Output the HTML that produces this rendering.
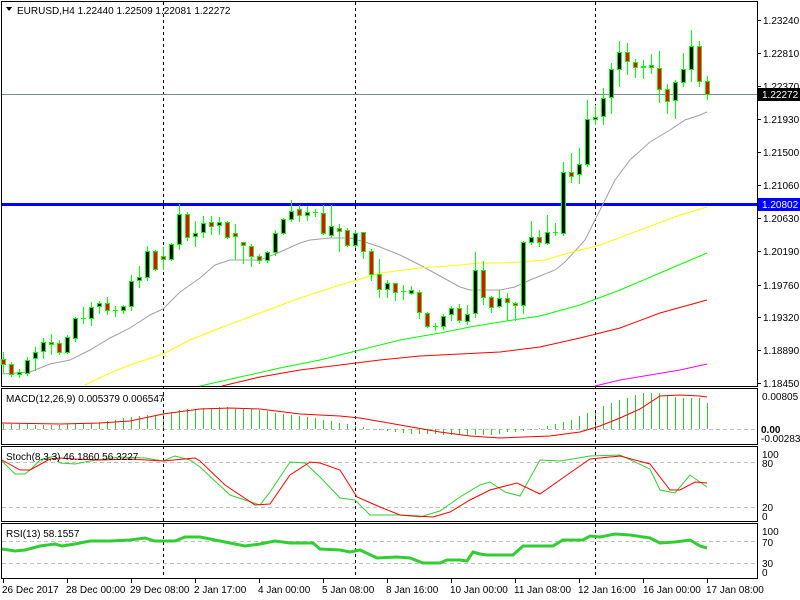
<!DOCTYPE html>
<html><head><meta charset="utf-8"><style>
html,body{margin:0;padding:0;background:#fff;width:800px;height:600px;overflow:hidden}
svg{display:block}
text{font-family:"Liberation Sans",sans-serif;font-size:10px;fill:#000}
</style></head><body>
<svg id="s" width="800" height="600" xmlns="http://www.w3.org/2000/svg" shape-rendering="crispEdges">
<rect width="800" height="600" fill="#fff"/>
<g stroke="#000" fill="none">
<rect x="1.5" y="1.5" width="756" height="385"/>
<rect x="1.5" y="388.5" width="756" height="56"/>
<rect x="1.5" y="446.5" width="756" height="75"/>
<rect x="1.5" y="523.5" width="756" height="55"/>
</g>
<g stroke="#c0c0c0" stroke-dasharray="4,3">
<line x1="2" y1="429.5" x2="757" y2="429.5"/>
<line x1="2" y1="462.5" x2="757" y2="462.5"/>
<line x1="2" y1="507.5" x2="757" y2="507.5"/>
<line x1="2" y1="541.5" x2="757" y2="541.5"/>
<line x1="2" y1="563.5" x2="757" y2="563.5"/>
</g>
<g id="hist" stroke="#32c832" stroke-width="1"></g>
<g stroke="#000" stroke-dasharray="3,3">
<line x1="163.5" y1="2" x2="163.5" y2="578"/>
<line x1="355.5" y1="2" x2="355.5" y2="578"/>
<line x1="595.5" y1="2" x2="595.5" y2="578"/>
</g>
<line x1="2" y1="94.5" x2="757" y2="94.5" stroke="#778899"/>
<rect x="2" y="203" width="755" height="3" fill="#0000ff"/>
<g fill="none" shape-rendering="auto" stroke-width="1">
<polyline stroke="#a0a0a0" points="2,374 30,372 50,364 70,360 90,350 110,338 130,328 150,315 163,309 180,292 200,278 215,265 230,260 245,260 260,260 280,252 300,243 310,240 330,238 350,238 365,242 380,247 400,255 420,265 440,276 460,287 470,290 480,290 500,290 515,287 530,280 555,270 565,262 585,240 600,210 615,180 630,160 650,142 670,130 685,120 700,115 707,112"/>
<polyline stroke="#ffff00" points="85,385 110,373 130,365 163,354 190,340 220,328 260,313 300,298 340,285 360,279 380,273 420,268 460,265 480,263 500,263 520,262 545,260 565,254 600,245 640,230 680,215 707,207"/>
<polyline stroke="#00ff00" points="200,386 240,377 280,368 320,360 360,350 400,340 440,333 470,327 500,322 540,316 580,305 620,290 660,273 707,253"/>
<polyline stroke="#ff0000" points="222,386 260,377 300,370 340,365 380,360 420,356 460,354 500,352 540,347 580,338 620,328 660,313 707,300"/>
<polyline stroke="#ff00ff" points="595,386 620,380 650,375 680,370 707,364"/>
</g>
<g id="candles"></g>
<g fill="none" shape-rendering="auto">
<polyline stroke="#ff0000" points="2,423 60,424 100,423 130,421 163,414 200,409 230,408 260,409 300,414 340,416 360,418 400,425 440,432 470,436 500,438 550,436 580,432 600,426 620,418 640,409 660,396 680,395 700,396 707,397"/>
<polyline stroke="#32cd32" points="2,461 15,474 25,474 30,470 40,460 55,456 60,463 75,464 90,461 120,457 145,458 163,461 175,456 190,460 200,467 230,495 260,505 270,492 290,462 305,463 320,477 340,498 355,500 370,515 400,515 420,517 440,511 460,497 480,485 490,482 505,492 520,496 540,460 560,461 590,456 620,455 650,469 660,490 675,493 690,475 707,487"/>
<polyline stroke="#ff0000" points="2,460 20,470 30,470 50,459 60,458 75,459 100,460 130,459 163,461 195,458 200,461 225,485 255,505 270,504 290,475 310,462 320,463 340,470 357,497 380,507 400,515 433,517 450,512 470,500 490,490 517,483 540,494 567,475 590,459 620,456 650,464 670,490 680,490 695,482 707,483"/>
<polyline stroke="#32cd32" stroke-width="3" points="2,549 15,551 25,550 40,546 55,544 62,546 75,544 90,541 110,541 130,540 145,538 155,541 175,541 185,537 200,537 220,541 245,546 260,544 275,541 290,543 313,543 320,549 340,550 350,552 360,550 377,558 397,557 410,558 423,563 440,563 447,560 460,560 467,561 473,552 480,554 487,555 513,555 523,546 553,546 563,540 583,540 590,536 600,537 615,534 630,535 650,538 660,543 675,542 690,540 700,546 707,548"/>
</g>
<g stroke="#000">
<line x1="757" y1="20.5" x2="761" y2="20.5"/><line x1="757" y1="53.5" x2="761" y2="53.5"/><line x1="757" y1="86.5" x2="761" y2="86.5"/><line x1="757" y1="119.5" x2="761" y2="119.5"/><line x1="757" y1="152.5" x2="761" y2="152.5"/><line x1="757" y1="185.5" x2="761" y2="185.5"/><line x1="757" y1="218.5" x2="761" y2="218.5"/><line x1="757" y1="251.5" x2="761" y2="251.5"/><line x1="757" y1="285.5" x2="761" y2="285.5"/><line x1="757" y1="317.5" x2="761" y2="317.5"/><line x1="757" y1="350.5" x2="761" y2="350.5"/><line x1="757" y1="383.5" x2="761" y2="383.5"/>
</g>
<g>
<text x="763" y="24">1.23240</text><text x="763" y="57">1.22810</text><text x="763" y="90">1.22370</text><text x="763" y="123">1.21930</text><text x="763" y="156">1.21500</text><text x="763" y="189">1.21060</text><text x="763" y="222">1.20630</text><text x="763" y="255">1.20190</text><text x="763" y="289">1.19760</text><text x="763" y="321">1.19320</text><text x="763" y="354">1.18890</text><text x="763" y="387">1.18450</text>
</g>
<rect x="758" y="88" width="42" height="13" fill="#000"/>
<text x="762" y="98" style="fill:#fff">1.22272</text>
<rect x="758" y="198" width="42" height="13" fill="#0000ff"/>
<text x="762" y="208" style="fill:#fff">1.20802</text>
<text x="762" y="400">0.00805</text>
<text x="761" y="433" font-weight="bold">0.00</text>
<text x="761" y="442">-0.002839</text>
<text x="762" y="458">100</text><text x="762" y="467">80</text><text x="762" y="511">20</text><text x="762" y="520">0</text>
<text x="762" y="535">100</text><text x="762" y="546">70</text><text x="762" y="567">30</text><text x="762" y="576">0</text>
<path d="M6 7 L12 7 L9 11 Z" fill="#000"/>
<text x="17" y="14">EURUSD,H4  1.22440 1.22509 1.22081 1.22272</text>
<text x="6" y="402">MACD(12,26,9) 0.005379 0.006547</text>
<text x="6" y="460">Stoch(8,3,3) 46.1860 56.3227</text>
<text x="6" y="537">RSI(13) 58.1557</text>
<g stroke="#000">
<line x1="3.5" y1="579" x2="3.5" y2="583"/><line x1="67.5" y1="579" x2="67.5" y2="583"/><line x1="131.5" y1="579" x2="131.5" y2="583"/><line x1="195.5" y1="579" x2="195.5" y2="583"/><line x1="259.5" y1="579" x2="259.5" y2="583"/><line x1="323.5" y1="579" x2="323.5" y2="583"/><line x1="387.5" y1="579" x2="387.5" y2="583"/><line x1="451.5" y1="579" x2="451.5" y2="583"/><line x1="515.5" y1="579" x2="515.5" y2="583"/><line x1="579.5" y1="579" x2="579.5" y2="583"/><line x1="643.5" y1="579" x2="643.5" y2="583"/><line x1="707.5" y1="579" x2="707.5" y2="583"/>
</g>
<g>
<text x="2" y="593">26 Dec 2017</text><text x="66" y="593">28 Dec 00:00</text><text x="130" y="593">29 Dec 08:00</text><text x="194" y="593">2 Jan 17:00</text><text x="258" y="593">4 Jan 00:00</text><text x="322" y="593">5 Jan 08:00</text><text x="386" y="593">8 Jan 16:00</text><text x="450" y="593">10 Jan 00:00</text><text x="514" y="593">11 Jan 08:00</text><text x="578" y="593">12 Jan 16:00</text><text x="643" y="593">16 Jan 00:00</text><text x="706" y="593">17 Jan 08:00</text>
</g>
</svg>
<script>
var C=[["r",359,364,352,372],["r",364,374,362,376],["b",372,374,369,377],["b",360,373,357,375],["b",352,358,347,370],["b",342,351,338,358],["r",342,344,334,354],["r",343,352,340,354],["b",337,352,335,353],["b",318,338,317,341],["x",318,318,307,323],["b",307,318,302,325],["b",303,306,301,313],["r",303,310,297,314],["x",310,310,306,316],["b",306,310,305,313],["b",281,306,275,310],["b",277,280,266,287],["b",251,277,246,280],["r",251,269,250,270],["r",256,259,247,269],["b",244,259,243,260],["b",214,244,204,249],["r",214,237,212,240],["b",233,236,221,246],["b",223,232,216,237],["r",222,226,216,234],["b",222,225,217,234],["r",222,237,221,238],["r",233,236,224,259],["r",242,245,242,263],["r",246,256,244,266],["r",256,260,254,263],["b",252,260,251,262],["b",233,252,230,255],["b",219,233,218,234],["b",211,219,200,221],["r",209,215,205,221],["b",212,215,206,220],["x",212,212,209,216],["r",213,233,205,234],["b",226,235,205,237],["r",228,231,224,251],["r",230,245,228,246],["b",233,245,230,247],["r",232,251,232,258],["r",251,274,249,280],["r",274,289,259,297],["b",283,289,280,297],["r",283,292,283,300],["x",291,291,285,299],["b",290,293,286,294],["r",292,312,290,318],["r",313,326,312,327],["x",326,326,323,330],["b",316,326,314,329],["b",308,314,306,320],["r",308,320,304,322],["b",314,321,305,324],["b",270,313,252,317],["r",270,297,261,304],["r",297,307,296,312],["b",298,306,290,307],["r",298,302,293,320],["r",303,305,302,320],["b",242,305,241,313],["b",237,242,221,244],["r",237,242,230,246],["b",232,243,215,244],["x",232,232,223,235],["b",172,233,162,235],["r",172,176,153,182],["b",164,174,148,183],["b",119,164,100,166],["b",117,119,105,124],["b",98,116,88,124],["b",69,97,63,113],["b",52,69,41,86],["r",52,61,43,74],["r",62,67,59,77],["b",66,67,60,78],["r",65,67,54,73],["r",68,89,51,102],["r",89,101,84,113],["b",82,100,80,118],["b",69,82,53,86],["b",46,69,30,81],["r",46,81,41,86],["r",81,94,76,99]];
var ns="http://www.w3.org/2000/svg",g=document.getElementById("candles"),h=document.getElementById("hist");
function el(t,a,p){var e=document.createElementNS(ns,t);for(var k in a)e.setAttribute(k,a[k]);p.appendChild(e);return e;}
C.forEach(function(c,i){var x=3+8*i;
el("line",{x1:x+.5,y1:c[3],x2:x+.5,y2:c[4]+1,stroke:"#00ff00"},g);
if(c[0]=="x"){el("line",{x1:x-2,y1:c[1]+.5,x2:x+3,y2:c[1]+.5,stroke:"#00ff00"},g);}
else{el("rect",{x:x-1.5,y:c[1]+.5,width:4,height:Math.max(1,c[2]-c[1]),fill:c[0]=="b"?"#000":"#ff0000",stroke:"#00ff00"},g);}
});
var H=[[3,424],[60,425],[100,422],[130,417],[163,414],[180,410],[200,408],[230,407],[260,410],[290,415],[320,419],[340,423],[360,427],[380,430],[400,433],[420,434],[460,435],[490,435],[510,432],[530,430],[550,425],[570,420],[590,412],[600,407],[620,400],[640,393],[660,393],[680,398],[700,398],[707,403]];
function itp(x){for(var k=0;k<H.length-1;k++){if(x>=H[k][0]&&x<=H[k+1][0]){var t=(x-H[k][0])/(H[k+1][0]-H[k][0]);return H[k][1]+t*(H[k+1][1]-H[k][1]);}}return H[H.length-1][1];}
for(var i=0;i<89;i++){var x=3+8*i,y=Math.round(itp(x));if(Math.abs(y-429)<1)continue;el("line",{x1:x+.5,y1:Math.min(y,429),x2:x+.5,y2:Math.max(y,429)},h);}
</script>
</body></html>
